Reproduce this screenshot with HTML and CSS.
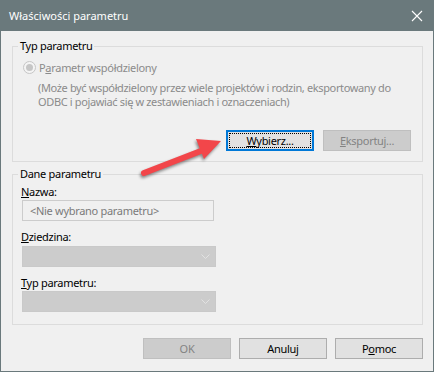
FILE: index.html
```html
<!DOCTYPE html>
<html>
<head>
    <title>Właściwości parametru</title>
    <link rel="stylesheet" href="styles.css">
</head>
<body>
<div class="window">
    <div class="titlebar">
        <span class="title">Właściwości parametru</span>
        <svg class="close" width="12" height="12" viewBox="0 0 12 12">
            <path d="M1 1 L11 11 M11 1 L1 11" stroke="#fff" stroke-width="1.1" fill="none"/>
        </svg>
    </div>
    <div class="content">
        <fieldset class="group group-type">
            <legend>Typ parametru</legend>
            <div class="radio-row">
                <span class="radio"><span class="radio-dot"></span></span>
                <span>P<u>a</u>rametr współdzielony</span>
            </div>
            <p class="desc">(Może być współdzielony przez wiele projektów i rodzin, eksportowany do<br>ODBC i pojawiać się w zestawieniach i oznaczeniach)</p>
            <div class="group-buttons">
                <button class="btn btn-default"><span class="focus-rect"><u>W</u>ybierz...</span></button>
                <button class="btn" disabled><u>E</u>ksportuj...</button>
            </div>
        </fieldset>
        <fieldset class="group group-data">
            <legend>Dane parametru</legend>
            <div class="field-label"><u>N</u>azwa:</div>
            <div class="textbox">&lt;Nie wybrano parametru&gt;</div>
            <div class="field-label spaced"><u>D</u>ziedzina:</div>
            <div class="combo combo-first">
                <svg width="9" height="5" viewBox="0 0 9 5"><path d="M0.5 0.5 L4.5 4.5 L8.5 0.5" stroke="#e2e2e2" fill="none"/></svg>
            </div>
            <div class="field-label spaced"><u>T</u>yp parametru:</div>
            <div class="combo">
                <svg width="9" height="5" viewBox="0 0 9 5"><path d="M0.5 0.5 L4.5 4.5 L8.5 0.5" stroke="#e2e2e2" fill="none"/></svg>
            </div>
        </fieldset>
        <div class="dialog-buttons">
            <button class="btn" disabled>OK</button>
            <button class="btn">Anuluj</button>
            <button class="btn">P<u>o</u>moc</button>
        </div>
    </div>
    <svg class="arrow" width="434" height="372" viewBox="0 0 434 372">
        <line x1="144" y1="173" x2="206" y2="149" stroke="#f2464a" stroke-width="6" stroke-linecap="round"/>
        <polygon points="196,139 221,141 204,159" fill="#f2464a"/>
    </svg>
</div>
</body>
</html>
```

FILE: styles.css
```css
body {
    margin: 0;
    padding: 0;
    font-family: "Noto Sans", sans-serif;
    font-size: 11px;
    letter-spacing: -0.3px;
}
.window {
    position: relative;
    width: 434px;
    height: 372px;
    box-sizing: border-box;
    border: 1px solid #6a797c;
    background: #f0f0f0;
    overflow: hidden;
}
.titlebar {
    height: 30px;
    background: #6a797c;
    color: #fff;
    display: flex;
    align-items: center;
    justify-content: space-between;
    padding: 0 10px 0 8px;
}
.title {
    font-size: 11px;
    letter-spacing: 0;
    margin-top: -1px;
}
.close {
    margin-top: -1px;
}
.content {
    padding: 7px 10px 0 11px;
}
.group {
    margin: 0;
    min-width: 0;
    border: 1px solid #dcdcdc;
    padding: 0 11px 10px 9px;
}
.group legend {
    padding: 0 2px;
    margin-left: -4px;
    line-height: 16px;
    color: #000;
}
.radio-row {
    margin-top: 5px;
    height: 16px;
    display: flex;
    align-items: center;
    gap: 3px;
    color: #8b8b8b;
}
.radio {
    width: 11px;
    height: 11px;
    margin-left: 1px;
    border: 1px solid #c6c6c6;
    border-radius: 50%;
    background: #f4f4f4;
    display: flex;
    align-items: center;
    justify-content: center;
}
.radio-dot {
    width: 7px;
    height: 7px;
    border-radius: 50%;
    background: #c6c6c6;
}
.desc {
    margin: 6px 0 0 16px;
    line-height: 14px;
    color: #8b8b8b;
    letter-spacing: -0.36px;
    white-space: nowrap;
}
.group-buttons {
    margin-top: 21px;
    display: flex;
    justify-content: flex-end;
    gap: 9px;
}
.btn {
    width: 88px;
    height: 21px;
    box-sizing: border-box;
    padding: 0;
    margin: 0;
    font-family: "Noto Sans", sans-serif;
    font-size: 11px;
    letter-spacing: -0.3px;
    color: #000;
    background: #e1e1e1;
    border: 1px solid #adadad;
    border-radius: 0;
    display: flex;
    align-items: center;
    justify-content: center;
}
.btn:disabled {
    background: #cccccc;
    border-color: #bfbfbf;
    color: #838383;
}
.btn-default {
    border: 2px solid #0078d7;
    padding: 1px;
}
.focus-rect {
    box-sizing: border-box;
    width: 100%;
    height: 100%;
    border: 1px dotted #000;
    display: flex;
    align-items: center;
    justify-content: center;
}
.group-data {
    margin-top: 4px;
    padding-bottom: 12px;
}
.field-label {
    margin-top: 2px;
    margin-left: -1px;
    line-height: 16px;
    color: #000;
}
.field-label.spaced {
    margin-top: 8px;
}
.textbox {
    width: 192px;
    height: 21px;
    box-sizing: border-box;
    border: 1px solid #cccccc;
    background: #f0f0f0;
    color: #7a7a7a;
    padding-left: 7px;
    line-height: 19px;
}
.combo {
    width: 194px;
    height: 21px;
    box-sizing: border-box;
    background: #cccccc;
    border: 1px solid #c9c9c9;
    display: flex;
    align-items: center;
    justify-content: flex-end;
    padding-right: 5px;
}
.combo-first {
    margin-top: 1px;
}
.dialog-buttons {
    margin-top: 13px;
    display: flex;
    justify-content: flex-end;
    gap: 8px;
}
.arrow {
    position: absolute;
    left: -1px;
    top: -1px;
    pointer-events: none;
    filter: drop-shadow(-1px 2px 1.5px rgba(0, 0, 0, 0.45));
}
```
